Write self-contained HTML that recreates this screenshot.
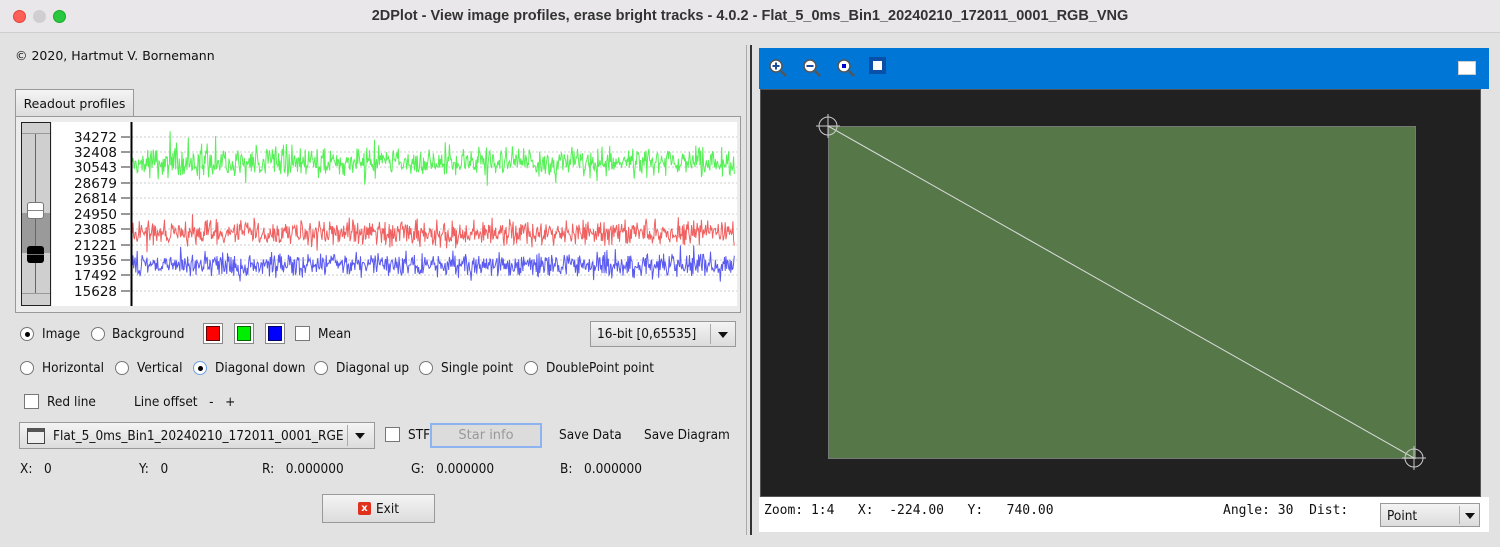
<!DOCTYPE html>
<html><head><meta charset="utf-8"><style>
*{box-sizing:border-box;margin:0;padding:0}
body{width:1500px;height:547px;background:#e2e2e2;font-family:"DejaVu Sans","Liberation Sans",sans-serif;font-size:13px;color:#111;position:relative;overflow:hidden;border-radius:10px}
.a{position:absolute;white-space:nowrap}
.title{left:0;top:0;width:1500px;height:33px;background:#e9e7e9;border-bottom:1px solid #cfcfcf;text-align:center;line-height:33px;font-family:"Liberation Sans",sans-serif;font-weight:bold;font-size:14.5px;color:#333}
.dot{width:13px;height:13px;border-radius:50%;top:10px}
.rad{width:14px;height:14px;border:1px solid #777;border-radius:50%;background:#fff}
.rad.on::after{content:"";position:absolute;left:4px;top:4px;width:5px;height:5px;border-radius:50%;background:#000}
.chk{width:15px;height:15px;border:1px solid #777;background:#fff}
.lbl{font-size:13.5px;transform:scaleX(.9);transform-origin:left}
.btn{border:1px solid #999;background:linear-gradient(#f4f4f4,#dcdcdc)}
.mono{font-family:"DejaVu Sans Mono","Liberation Mono",monospace;font-size:13px}
</style></head><body>
<div class="a title">2DPlot - View image profiles, erase bright tracks - 4.0.2 - Flat_5_0ms_Bin1_20240210_172011_0001_RGB_VNG</div>
<div class="a dot" style="left:13px;background:#fe5f57;border:1px solid #e0443e"></div>
<div class="a dot" style="left:33px;background:#cfcfcf"></div>
<div class="a dot" style="left:53px;background:#2ac840;border:1px solid #1aab29"></div>

<div class="a" style="left:15px;top:48px;font-size:12.5px">© 2020, Hartmut V. Bornemann</div>
<div class="a btn" style="left:15px;top:89px;width:119px;height:28px;border-bottom:none;line-height:27px;text-align:center;font-size:12.5px">Readout profiles</div>
<div class="a" style="left:15px;top:116px;width:726px;height:197px;border:1px solid #999;background:#ececec"></div>
<div class="a" style="left:21px;top:122px;width:30px;height:184px;border:1px solid #222;background:#cfcfcf"></div>
<div class="a" style="left:22px;top:133px;width:28px;height:1px;background:#999"></div>
<div class="a" style="left:22px;top:293px;width:28px;height:1px;background:#999"></div>
<div class="a" style="left:22px;top:213px;width:28px;height:40px;background:#9a9a9a"></div>
<div class="a" style="left:35px;top:134px;width:1px;height:159px;background:#666"></div>
<div class="a" style="left:27px;top:202px;width:17px;height:17px;border:1px solid #777;border-radius:3px;background:#fff"><div style="margin-top:7px;height:1px;background:#888"></div></div>
<div class="a" style="left:27px;top:246px;width:17px;height:17px;border-radius:3px;background:#000"><div style="margin-top:8px;height:1px;background:#777"></div></div>
<svg class="a" style="left:52px;top:122px" width="685" height="184" id="plot">
<rect width="685" height="184" fill="#fff"/>
<g id="grid" stroke="#ccc" stroke-dasharray="2,2"></g>
<line x1="79.5" y1="0" x2="79.5" y2="184" stroke="#000" stroke-width="2"/>
<g id="lab" font-family="DejaVu Sans,sans-serif" font-size="13.5" text-anchor="end" fill="#111"></g>
<path id="g" fill="none" stroke="#55f055" stroke-width="1"/>
<path id="r" fill="none" stroke="#f06060" stroke-width="1"/>
<path id="b" fill="none" stroke="#5a5af0" stroke-width="1"/>
</svg>
<script>
var ys=[15,30,45,61,76,92,107,123,138,153,169],vs=["34272","32408","30543","28679","26814","24950","23085","21221","19356","17492","15628"];
var g=document.getElementById('grid'),l=document.getElementById('lab'),s='',t='';
for(var i=0;i<11;i++){s+='<line x1="80" x2="685" y1="'+ys[i]+'" y2="'+ys[i]+'"/><line x1="69" x2="78" stroke-dasharray="none" stroke="#333" y1="'+ys[i]+'" y2="'+ys[i]+'"/>';t+='<text x="65" y="'+(ys[i]+5)+'">'+vs[i]+'</text>';}
g.innerHTML=s;l.innerHTML=t;
var seed=7;function rnd(){seed=(seed*16807)%2147483647;return seed/2147483647;}
function mk(id,c,a){var d='M81 '+c;for(var x=81;x<683;x+=0.7){var n=(rnd()+rnd()+rnd()-1.5)*a;if(rnd()<0.03)n*=1.8;d+='L'+x.toFixed(1)+' '+(c+n).toFixed(1);}document.getElementById(id).setAttribute('d',d);}
mk('g',40,14);mk('r',111,13);mk('b',143,12);
</script>
<div class="a rad on" style="left:20px;top:327px"></div><div class="a lbl" style="left:42px;top:326px">Image</div>
<div class="a rad" style="left:91px;top:327px"></div><div class="a lbl" style="left:112px;top:326px">Background</div>
<div class="a" style="left:203px;top:323px;width:20px;height:21px;border:1px solid #888;background:#fff;padding:2px"><div style="width:100%;height:100%;background:#f00;border:1px solid #600"></div></div>
<div class="a" style="left:234px;top:323px;width:20px;height:21px;border:1px solid #888;background:#fff;padding:2px"><div style="width:100%;height:100%;background:#0e0;border:1px solid #060"></div></div>
<div class="a" style="left:265px;top:323px;width:20px;height:21px;border:1px solid #888;background:#fff;padding:2px"><div style="width:100%;height:100%;background:#00f;border:1px solid #006"></div></div>
<div class="a chk" style="left:295px;top:326px"></div><div class="a lbl" style="left:318px;top:326px">Mean</div>
<div class="a btn" style="left:590px;top:321px;width:146px;height:26px"><span class="a lbl" style="left:6px;top:4px">16-bit [0,65535]</span><div class="a" style="left:119px;top:2px;width:1px;height:20px;background:#aaa"></div><div class="a" style="left:127px;top:10px;border:5px solid transparent;border-top:6px solid #111;border-bottom:none"></div></div>
<div class="a rad" style="left:20px;top:361px"></div><div class="a lbl" style="left:42px;top:360px">Horizontal</div>
<div class="a rad" style="left:115px;top:361px"></div><div class="a lbl" style="left:137px;top:360px">Vertical</div>
<div class="a rad on" style="left:193px;top:361px;border-color:#6d9ee6"></div><div class="a lbl" style="left:215px;top:360px">Diagonal down</div>
<div class="a rad" style="left:314px;top:361px"></div><div class="a lbl" style="left:336px;top:360px">Diagonal up</div>
<div class="a rad" style="left:419px;top:361px"></div><div class="a lbl" style="left:441px;top:360px">Single point</div>
<div class="a rad" style="left:524px;top:361px"></div><div class="a lbl" style="left:546px;top:360px">DoublePoint point</div>
<div class="a chk" style="left:24px;top:394px"></div><div class="a lbl" style="left:47px;top:394px">Red line</div>
<div class="a lbl" style="left:134px;top:394px">Line offset &nbsp;&nbsp;- &nbsp;&nbsp;+</div>
<div class="a btn" style="left:19px;top:422px;width:356px;height:27px"><div class="a" style="left:7px;top:5px;width:18px;height:16px;border:1px solid #444;background:#eee;border-top:4px solid #555"></div><span class="a lbl" style="left:33px;top:5px">Flat_5_0ms_Bin1_20240210_172011_0001_RGE</span><div class="a" style="left:327px;top:2px;width:1px;height:21px;background:#aaa"></div><div class="a" style="left:335px;top:10px;border:5px solid transparent;border-top:6px solid #111;border-bottom:none"></div></div>
<div class="a chk" style="left:385px;top:427px"></div><div class="a lbl" style="left:408px;top:427px">STF</div>
<div class="a" style="left:430px;top:423px;width:112px;height:25px;border:2px solid #8db3f0;background:#dcdcdc;text-align:center;line-height:21px;color:#999;font-size:13px">Star info</div>
<div class="a lbl" style="left:559px;top:427px">Save Data</div>
<div class="a lbl" style="left:644px;top:427px">Save Diagram</div>
<div class="a lbl" style="left:20px;top:461px">X: &nbsp;&nbsp;0</div>
<div class="a lbl" style="left:139px;top:461px">Y: &nbsp;&nbsp;0</div>
<div class="a lbl" style="left:262px;top:461px">R: &nbsp;&nbsp;0.000000</div>
<div class="a lbl" style="left:411px;top:461px">G: &nbsp;&nbsp;0.000000</div>
<div class="a lbl" style="left:560px;top:461px">B: &nbsp;&nbsp;0.000000</div>
<div class="a btn" style="left:322px;top:494px;width:113px;height:29px"><div class="a" style="left:35px;top:7px;width:13px;height:13px;background:#e0301e;border-radius:2px;color:#fff;font-size:10px;font-weight:bold;text-align:center;line-height:13px">x</div><span class="a lbl" style="left:53px;top:6px">Exit</span></div>
<div class="a" style="left:746px;top:45px;width:1px;height:490px;background:#aaa"></div>
<div class="a" style="left:750px;top:45px;width:2px;height:490px;background:#333"></div>
<div class="a" style="left:759px;top:48px;width:730px;height:41px;background:#0077d6"></div>
<svg class="a" style="left:766px;top:56px" width="130" height="26">
<g stroke="#555" stroke-width="2.5" fill="#fff"><line x1="15" y1="15" x2="20" y2="20"/><line x1="49" y1="15" x2="54" y2="20"/><line x1="83" y1="15" x2="88" y2="20"/></g>
<g stroke="#555" stroke-width="1.5" fill="#fff"><circle cx="10" cy="10" r="6"/><circle cx="44" cy="10" r="6"/><circle cx="78" cy="10" r="6"/></g>
<g stroke="#1a4b9c" stroke-width="2"><line x1="6.5" y1="10" x2="13.5" y2="10"/><line x1="10" y1="6.5" x2="10" y2="13.5"/><line x1="40.5" y1="10" x2="47.5" y2="10"/></g>
<rect x="76" y="8" width="4" height="4" fill="#00c"/>
<rect x="103" y="1" width="17" height="17" fill="#0a4fa8"/><rect x="107" y="5" width="9" height="9" fill="#fff"/>
</svg>
<div class="a" style="left:1458px;top:61px;width:18px;height:14px;background:#fff;border:1px solid #ccc"></div>
<div class="a" style="left:760px;top:89px;width:721px;height:408px;background:#212121;border:1px solid #555"></div>
<svg class="a" style="left:760px;top:89px" width="721" height="408">
<rect x="68.5" y="37.5" width="587" height="332" fill="#567849" stroke="#777"/>
<line x1="68" y1="37" x2="654" y2="369" stroke="#ddd" stroke-width="1"/>
<g stroke="#ccc" fill="none" stroke-width="1"><circle cx="68" cy="37" r="9"/><line x1="56" y1="37" x2="80" y2="37"/><line x1="68" y1="25" x2="68" y2="49"/>
<circle cx="654" cy="369" r="9"/><line x1="642" y1="369" x2="666" y2="369"/><line x1="654" y1="357" x2="654" y2="381"/></g>
</svg>
<div class="a" style="left:759px;top:497px;width:730px;height:35px;background:#fff"></div>
<div class="a mono" style="left:764px;top:503px">Zoom: 1:4 &nbsp;&nbsp;X: &nbsp;-224.00 &nbsp;&nbsp;Y: &nbsp;&nbsp;740.00</div>
<div class="a mono" style="left:1223px;top:503px">Angle: 30 &nbsp;Dist:</div>
<div class="a btn" style="left:1380px;top:503px;width:100px;height:24px"><span class="a lbl" style="left:6px;top:4px">Point</span><div class="a" style="left:78px;top:2px;width:1px;height:18px;background:#aaa"></div><div class="a" style="left:84px;top:9px;border:5px solid transparent;border-top:6px solid #111;border-bottom:none"></div></div>
</body></html>
